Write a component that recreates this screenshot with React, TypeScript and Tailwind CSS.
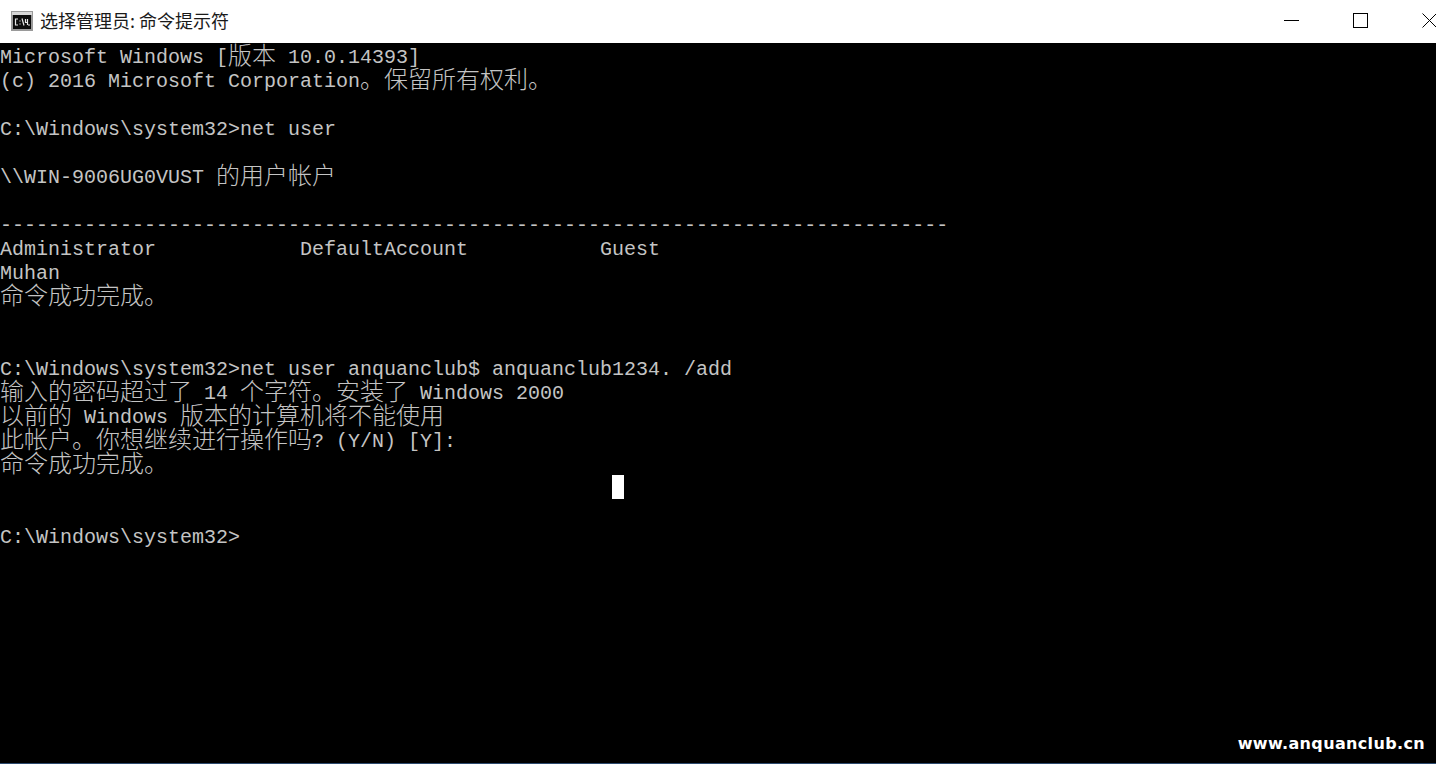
const LINES = [
  'Microsoft Windows [版本 10.0.14393]',
  '(c) 2016 Microsoft Corporation。保留所有权利。',
  '',
  'C:\\Windows\\system32>net user',
  '',
  '\\\\WIN-9006UG0VUST 的用户帐户',
  '',
  '-------------------------------------------------------------------------------',
  'Administrator            DefaultAccount           Guest',
  'Muhan',
  '命令成功完成。',
  '',
  '',
  'C:\\Windows\\system32>net user anquanclub$ anquanclub1234. /add',
  '输入的密码超过了 14 个字符。安装了 Windows 2000',
  '以前的 Windows 版本的计算机将不能使用',
  '此帐户。你想继续进行操作吗? (Y/N) [Y]:',
  '命令成功完成。',
  '',
  '',
  'C:\\Windows\\system32>',
];

// half width runs at 20px, full width runs at 24px, so columns stay on the 12px grid
function ConsoleLine({ text }: { text: string }) {
  const runs = text.match(/[\u3000-\u9fff]+|[^\u3000-\u9fff]+/g) ?? [];
  return (
    <div className="flex items-start h-6 whitespace-pre">
      {runs.map((run, i) =>
        /[\u3000-\u9fff]/.test(run) ? (
          <span key={i} className="block h-6 leading-6 -mt-[2px] text-[24px] text-[#c4c4c4] font-['Noto_Sans_CJK_SC',sans-serif] font-light">{run}</span>
        ) : (
          <span key={i} className="block h-6 leading-6 mt-[2px] text-[20px] text-[#c4c4c4] font-['Liberation_Mono',monospace]">{run}</span>
        )
      )}
    </div>
  );
}

export default function App() {
  return (
    <div className="relative w-[1436px] h-[764px] overflow-hidden bg-black flex flex-col">
      {/* Title bar */}
      <div className="h-[43px] shrink-0 bg-white flex items-center justify-between pl-[11px] pb-[2px]">
        <div className="flex items-center gap-[7px]">
          <svg width="22" height="20" viewBox="0 0 22 20">
            <rect width="22" height="20" fill="#9a9a9a" />
            <rect x="1" y="1" width="20" height="3" fill="#d8d8d8" />
            <rect x="2" y="4" width="18" height="14" fill="#0c0c0c" />
            <path d="M7 8H4.5V14H7M9 9.5V10.5M9 12.5V13.5M11 7.5L13 14.5M14.5 8V11.5H17M16.5 8V14M17 14H19" stroke="#e6e6e6" strokeWidth="1.2" fill="none" />
          </svg>
          <span className="text-[18px] text-[#1a1a1a] font-['Noto_Sans_CJK_SC',sans-serif]">选择管理员: 命令提示符</span>
        </div>
        <div className="flex items-center mr-[-28px]">
          <button className="w-[69px] h-[41px] flex items-center justify-center">
            <span className="block w-[15px] h-px bg-black" />
          </button>
          <button className="w-[69px] h-[41px] flex items-center justify-center">
            <span className="block w-[15px] h-[15px] border border-black" />
          </button>
          <button className="w-[69px] h-[41px] flex items-center justify-center">
            <svg width="15" height="15" viewBox="0 0 15 15">
              <path d="M0.5 0.5L14.5 14.5M14.5 0.5L0.5 14.5" stroke="#000" strokeWidth="1" fill="none" />
            </svg>
          </button>
        </div>
      </div>

      {/* Console output */}
      <div className="pt-px">
        {LINES.map((line, i) => (
          <ConsoleLine key={i} text={line} />
        ))}
      </div>

      {/* Mouse caret */}
      <div className="absolute left-[612px] top-[475px] w-3 h-6 bg-white" />

      {/* Watermark */}
      <div className="absolute right-[11px] top-[734px] text-[16px] leading-[20px] font-bold tracking-[0.35px] text-white font-['DejaVu_Sans',sans-serif]">
        www.anquanclub.cn
      </div>
      <div className="absolute left-0 right-0 bottom-0 h-px bg-[#2c4a6e]" />
    </div>
  );
}
